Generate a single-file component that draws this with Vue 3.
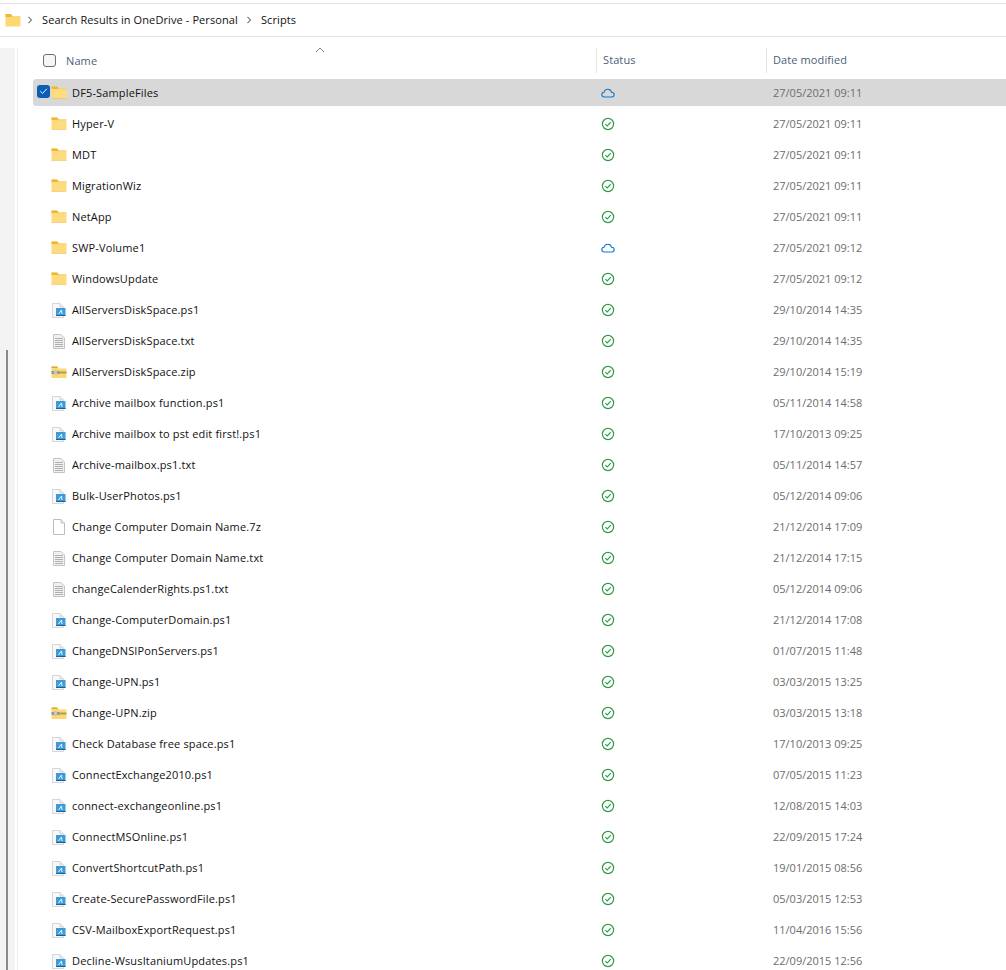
<template>
  <div class="explorer">
    <div class="crumbs">
      <svg class="crumb-folder" width="16" height="14" viewBox="0 0 16 14">
        <path d="M0.5 1.5 Q0.5 1 1 1 H5.5 L7.5 3 H15 Q15.5 3 15.5 3.5 V13 Q15.5 13.5 15 13.5 H1 Q0.5 13.5 0.5 13 Z" fill="#fcd873" />
        <path d="M0.5 1.5 Q0.5 1 1 1 H5.5 L7.5 3 L5.5 4 H0.5 Z" fill="#eeb735" />
      </svg>
      <svg class="sep" width="6" height="8" viewBox="0 0 6 8"><path d="M1.5 0.8 L4.5 4 L1.5 7.2" fill="none" stroke="#808080" stroke-width="1.2" /></svg>
      <span class="crumb">Search Results in OneDrive - Personal</span>
      <svg class="sep" width="6" height="8" viewBox="0 0 6 8"><path d="M1.5 0.8 L4.5 4 L1.5 7.2" fill="none" stroke="#808080" stroke-width="1.2" /></svg>
      <span class="crumb">Scripts</span>
    </div>

    <div class="body">
      <div class="rail"><div class="rail-fill"><div class="thumb"></div></div></div>
      <div class="list">
        <div class="head">
          <div class="head-name">
            <span class="box"></span>
            <span>Name</span>
            <svg class="sort" width="10" height="6" viewBox="0 0 10 6"><path d="M1 5 L5 1 L9 5" fill="none" stroke="#7d7d7d" /></svg>
          </div>
          <div class="head-col">Status</div>
          <div class="head-col">Date modified</div>
        </div>

        <div v-for="row in rows" :key="row.name" class="row" :class="{ selected: row.selected }">
          <div class="cell-name">
            <span v-if="row.selected" class="check">
              <svg width="14" height="14" viewBox="0 0 14 14"><path d="M3.5 7.2 L6 9.6 L10.6 4.6" fill="none" stroke="#fff" stroke-width="1" /></svg>
            </span>
            <svg class="ficon" width="16" height="16" viewBox="0 0 16 16">
              <template v-if="row.type === 'folder'">
                <path d="M0.5 1.5 H6 L8 3.5 H15.5 V13.5 H0.5 Z" fill="#fddc80" />
                <path d="M0.5 1.5 H6 L8 3.5 L6 4 H0.5 Z" fill="#edb733" />
                <path d="M8 3.5 H15.5 V4.2 H6 Z" fill="#f5c95c" />
                <path d="M0.5 13 H15.5 V13.5 H0.5 Z" fill="#eeb94a" />
              </template>
              <template v-else-if="row.type === 'ps1'">
                <path d="M1.5 1.5 H9 L12.5 5 V15.5 H1.5 Z" fill="#f7f8f9" stroke="#d4d7da" />
                <path d="M9 1.5 V5 H12.5" fill="#e8e8e8" stroke="#d4d7da" />
                <rect x="5" y="6" width="9.5" height="8" fill="#3d9cd8" />
                <path d="M7.5 12 L10.5 8 L11 12" fill="none" stroke="#eaf6ff" />
                <rect x="5" y="13" width="9.5" height="1" fill="#1d5f96" />
              </template>
              <template v-else-if="row.type === 'txt'">
                <path d="M2.5 1.5 H10 L13.5 5 V15.5 H2.5 Z" fill="#f0f0f0" stroke="#c4c4c4" />
                <path d="M4 5.5 H12 M4 7.5 H12 M4 9.5 H12 M4 11.5 H12 M4 13.5 H12" stroke="#b0b0b0" />
              </template>
              <template v-else-if="row.type === 'zip'">
                <path d="M0.5 2.5 H6 L8 4.5 H15.5 V14 H0.5 Z" fill="#fcd873" />
                <path d="M0.5 2.5 H6 L7 4 H0.5 Z" fill="#e3a92a" />
                <rect x="8" y="7.5" width="7.5" height="2" fill="#b39b52" />
                <rect x="0.5" y="7" width="8" height="3" fill="#9a9a8c" />
                <rect x="3" y="6" width="3" height="5" fill="#c9c9ba" />
              </template>
              <template v-else>
                <path d="M2.5 0.5 H10 L13.5 4 V15.5 H2.5 Z" fill="#fff" stroke="#bdbdbd" />
                <path d="M10 0.5 V4 H13.5" fill="#f4f4f4" stroke="#bdbdbd" />
              </template>
            </svg>
            <span class="fname">{{ row.name }}</span>
          </div>
          <div class="cell-status">
            <svg v-if="row.cloud" width="14" height="14" viewBox="0 0 14 14">
              <path d="M3.4 11 C1.7 11 0.8 9.8 0.8 8.6 C0.8 7.3 1.8 6.4 3 6.3 C3.4 4.3 5 3.2 6.8 3.2 C8.6 3.2 10.1 4.4 10.5 6.2 C12 6.2 13.2 7.2 13.2 8.6 C13.2 10 12.1 11 10.8 11 Z" fill="none" stroke="#0a78d4" stroke-width="1.1" />
            </svg>
            <svg v-else width="14" height="14" viewBox="0 0 14 14">
              <circle cx="7" cy="7" r="5.6" fill="#fff" stroke="#2f9a47" stroke-width="1.2" />
              <path d="M4.3 7.2 L6.2 9 L9.8 5.2" fill="none" stroke="#2f9a47" stroke-width="1.1" />
            </svg>
          </div>
          <div class="cell-date">{{ row.date }}</div>
        </div>
      </div>
    </div>
  </div>
</template>

<script setup>
const files = [
  ['DF5-SampleFiles', 'folder', '27/05/2021 09:11', true],
  ['Hyper-V', 'folder', '27/05/2021 09:11'],
  ['MDT', 'folder', '27/05/2021 09:11'],
  ['MigrationWiz', 'folder', '27/05/2021 09:11'],
  ['NetApp', 'folder', '27/05/2021 09:11'],
  ['SWP-Volume1', 'folder', '27/05/2021 09:12', true],
  ['WindowsUpdate', 'folder', '27/05/2021 09:12'],
  ['AllServersDiskSpace.ps1', 'ps1', '29/10/2014 14:35'],
  ['AllServersDiskSpace.txt', 'txt', '29/10/2014 14:35'],
  ['AllServersDiskSpace.zip', 'zip', '29/10/2014 15:19'],
  ['Archive mailbox function.ps1', 'ps1', '05/11/2014 14:58'],
  ['Archive mailbox to pst edit first!.ps1', 'ps1', '17/10/2013 09:25'],
  ['Archive-mailbox.ps1.txt', 'txt', '05/11/2014 14:57'],
  ['Bulk-UserPhotos.ps1', 'ps1', '05/12/2014 09:06'],
  ['Change Computer Domain Name.7z', 'blank', '21/12/2014 17:09'],
  ['Change Computer Domain Name.txt', 'txt', '21/12/2014 17:15'],
  ['changeCalenderRights.ps1.txt', 'txt', '05/12/2014 09:06'],
  ['Change-ComputerDomain.ps1', 'ps1', '21/12/2014 17:08'],
  ['ChangeDNSIPonServers.ps1', 'ps1', '01/07/2015 11:48'],
  ['Change-UPN.ps1', 'ps1', '03/03/2015 13:25'],
  ['Change-UPN.zip', 'zip', '03/03/2015 13:18'],
  ['Check Database free space.ps1', 'ps1', '17/10/2013 09:25'],
  ['ConnectExchange2010.ps1', 'ps1', '07/05/2015 11:23'],
  ['connect-exchangeonline.ps1', 'ps1', '12/08/2015 14:03'],
  ['ConnectMSOnline.ps1', 'ps1', '22/09/2015 17:24'],
  ['ConvertShortcutPath.ps1', 'ps1', '19/01/2015 08:56'],
  ['Create-SecurePasswordFile.ps1', 'ps1', '05/03/2015 12:53'],
  ['CSV-MailboxExportRequest.ps1', 'ps1', '11/04/2016 15:56'],
  ['Decline-WsusItaniumUpdates.ps1', 'ps1', '22/09/2015 12:56']
]

const rows = files.map(([name, type, date, cloud]) => ({
  name,
  type,
  date,
  cloud: !!cloud,
  selected: name === 'DF5-SampleFiles'
}))
</script>

<style>
html, body {
  background: #fff;
  overflow: hidden;
}
</style>

<style scoped>
.explorer {
  width: 1006px;
  height: 970px;
  overflow: hidden;
  font-family: "Open Sans", "Liberation Sans", sans-serif;
  font-size: 11px;
  color: #111;
  padding-top: 3px;
  box-sizing: border-box;
}

.crumbs {
  height: 34px;
  box-sizing: border-box;
  display: flex;
  align-items: center;
  border-top: 1px solid #e3e3e3;
  border-bottom: 1px solid #e3e3e3;
  padding-left: 5px;
  padding-bottom: 1px;
}

.crumb-folder {
  margin-right: 6px;
}

.sep {
  margin-right: 9px;
}

.crumb {
  margin-right: 8px;
  letter-spacing: 0.1px;
}

.body {
  display: flex;
}

.rail {
  width: 18px;
  height: 922px;
  margin-top: 11px;
  margin-right: 15px;
  box-sizing: border-box;
  border-right: 1px solid #ececec;
}

.rail-fill {
  width: 15px;
  height: 100%;
  box-sizing: border-box;
  background: #f3f3f3;
  padding-top: 302px;
  padding-left: 6px;
}

.thumb {
  width: 2px;
  height: 620px;
  background: #8a8a8a;
}

.list {
  flex: 1;
  min-width: 0;
}

.head {
  display: grid;
  grid-template-columns: 563px 170px 1fr;
  height: 42px;
  padding-top: 11px;
  box-sizing: border-box;
  letter-spacing: 0.1px;
}

.head-name {
  position: relative;
  display: flex;
  align-items: center;
  padding-left: 10px;
  gap: 10px;
  color: #4c607a;
  height: 25px;
}

.head-name span:last-of-type {
  margin-bottom: 1px;
}

.head-col {
  border-left: 1px solid #e5e5e5;
  padding-left: 6px;
  color: #4c607a;
  height: 25px;
  line-height: 23px;
}

.box {
  width: 11px;
  height: 11px;
  border: 1px solid #6e6e6e;
  border-radius: 3px;
  background: #f6f6f6;
}

.sort {
  position: absolute;
  left: 282px;
  top: -1px;
}

.row {
  display: grid;
  grid-template-columns: 564px 170px 1fr;
  height: 27px;
  margin-bottom: 4px;
  align-items: center;
  border-radius: 3px 0 0 3px;
}

.row.selected {
  background: #d8d8d8;
}

.cell-name {
  position: relative;
  display: flex;
  align-items: center;
  padding-left: 18px;
  gap: 5px;
}

.fname {
  letter-spacing: 0.15px;
  margin-bottom: 1px;
}

.check {
  position: absolute;
  left: 4px;
  top: 0;
  width: 13px;
  height: 13px;
  background: #0a5fb4;
  border-radius: 3px;
  display: flex;
  align-items: center;
  justify-content: center;
}

.cell-status {
  display: flex;
  align-items: center;
  padding-left: 4px;
}

.cell-date {
  padding-left: 6px;
  padding-bottom: 1px;
  color: #6d6d6d;
}
</style>
